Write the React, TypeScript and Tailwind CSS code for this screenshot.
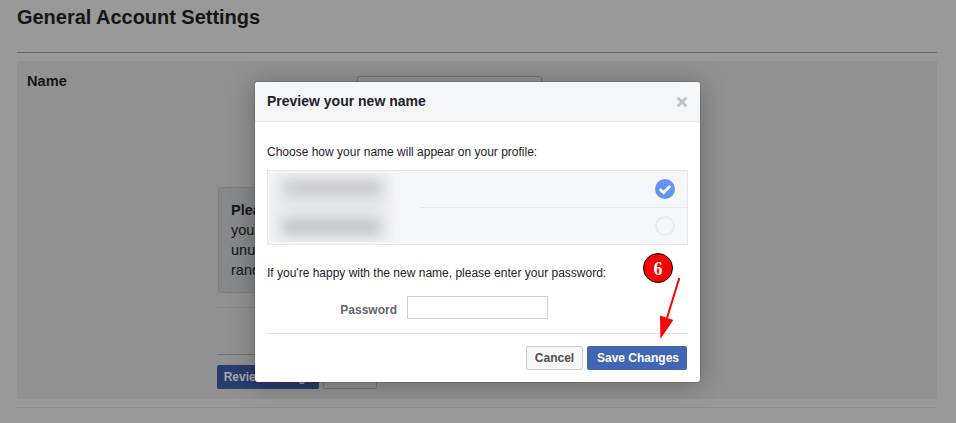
import React from "react";

const sans = "font-['Liberation_Sans',Arial,sans-serif]";

function SettingsPage() {
  return (
    <main className="h-full pl-[17px] pr-[19px] text-[#141517]">
      <h1 className="h-[52px] pt-[5px] text-[20px] leading-[24px] font-bold tracking-[-0.03px]">General Account Settings</h1>
      <div className="h-px bg-[#666666]" />
      <section className="mt-2 flex h-[338px] bg-[#919191]">
        <h2 className="w-[200px] shrink-0 pt-[11px] pl-[10px] text-[14.6px] leading-[18px] font-bold">Name</h2>
        <div className="w-[420px] pt-[15px]">
          <div className="ml-[140px] h-[24px] w-[185px] rounded-[2px] border border-[#707274] bg-[#959595]" />
          <div className="mt-[87px] ml-px h-[106px] w-[400px] rounded-[3px] border border-[#7a7c80] bg-[#86888b] pt-[12px] pl-[12px] text-[14.5px] leading-[20px] whitespace-nowrap">
            <p><b>Please</b></p>
            <p>your</p>
            <p>unusual</p>
            <p>rand</p>
          </div>
          <div className="mt-[14px] h-px bg-[#838383]" />
          <div className="mt-[46px] h-px bg-[#707070]" />
          <div className="mt-[10px] flex gap-1 text-[12px] leading-[22px] font-bold">
            <button className="h-6 w-[102px] rounded-[2px] border border-[#263e6d] bg-[#273d6b] whitespace-nowrap text-[#a5a8af]">Review Change</button>
            <button className="h-6 w-[54px] rounded-[2px] border border-[#737578] bg-[#919294] text-[#2d3035]">Cancel</button>
          </div>
        </div>
      </section>
      <div className="mt-2 h-px bg-[#8b8b8b]" />
    </main>
  );
}

function NameChoices() {
  return (
    <div className="relative mt-[10px] h-[75px] w-[421px] border border-[#e5e6e9] bg-[#f5f6f8]">
      <div className="flex h-9 items-center justify-end pr-[12px]">
        <svg width="20" height="20" viewBox="0 0 20 20">
          <circle cx="10" cy="10" r="10" fill="#6494f2" />
          <path d="M4.8 10 8.6 13.8 15.2 6.9" fill="none" stroke="white" strokeWidth="2.8" />
        </svg>
      </div>
      <div className="ml-[152px] h-px bg-[#e5e6e9]" />
      <div className="flex h-9 items-center justify-end pr-[12px]">
        <div className="h-5 w-5 rounded-full border-2 border-[#e8e9ec]" />
      </div>
      <div className="absolute top-[2px] left-[1px] h-[69px] w-[151px] overflow-hidden">
        <div className="absolute top-0 left-[6px] h-[69px] w-[114px] bg-[#e7e8ea] blur-[8px]" />
        <div className="absolute top-[8px] left-[16px] h-[14px] w-[96px] bg-[#c4c5c6] blur-[7px]" />
        <div className="absolute top-[47px] left-[14px] h-[14px] w-[96px] bg-[#bdbec2] blur-[7px]" />
      </div>
    </div>
  );
}

function PreviewDialog() {
  return (
    <div className="absolute top-[82px] left-[255px] h-[300px] w-[445px] overflow-hidden rounded-[3px] bg-white text-[12px] leading-4 text-[#1d2129]">
      <header className="flex h-10 items-center justify-between border-b border-[#e3e4e6] bg-[#f5f6f7] px-3">
        <h3 className="pb-[2px] text-[14px] leading-[18px] font-bold">Preview your new name</h3>
        <svg width="12" height="12" viewBox="0 0 12 12" className="mt-px">
          <path d="M1.7 1.7 10.3 10.3M10.3 1.7 1.7 10.3" stroke="#bec1c9" strokeWidth="2.8" fill="none" />
        </svg>
      </header>
      <div className="px-3 pt-[22px]">
        <p>Choose how your name will appear on your profile:</p>
        <NameChoices />
        <p className="mt-5">If you're happy with the new name, please enter your password:</p>
        <label className="mt-[15px] flex items-center font-bold text-[#606770]">
          <span className="w-[130px] pt-[5px] text-right">Password</span>
          <input type="password" className="ml-[10px] h-[23px] w-[141px] border border-[#ccd0d5] bg-white" />
        </label>
        <div className="mt-[14px] h-px bg-[#dddfe2]" />
        <div className="mt-3 flex justify-end gap-1 pr-px font-bold whitespace-nowrap">
          <button className="h-6 w-[57px] rounded-[2px] border border-[#ccd0d5] bg-[#f5f6f7] text-[#4b4f56]">Cancel</button>
          <button className="h-6 w-[100px] rounded-[2px] border border-[#4267b2] bg-[#4267b2] pl-[2px] text-white">Save Changes</button>
        </div>
      </div>
    </div>
  );
}

export default function App() {
  return (
    <div className={`relative h-[423px] w-full overflow-hidden bg-[#999999] ${sans}`}>
      <SettingsPage />
      <div className="absolute top-[82px] left-[255px] h-[300px] w-[445px] rounded-[3px] shadow-[0_2px_26px_rgba(0,0,0,0.3),0_0_0_1px_rgba(0,0,0,0.1)]" />
      <PreviewDialog />
      <div className="absolute top-[253px] left-[643px] flex h-[30px] w-[30px] items-center justify-center rounded-full border-[1.5px] border-black bg-[#ff0000] pt-[2px] font-['Liberation_Serif',serif] text-[18px] leading-none font-bold text-white">6</div>
      <svg width="24" height="64" viewBox="0 0 24 64" className="absolute top-[276px] left-[658px]">
        <path d="M21.3 2 9 42" stroke="#ff0000" strokeWidth="2" />
        <path d="M2 39.5 15.3 44 2.4 63Z" fill="#ff0000" />
      </svg>
    </div>
  );
}
